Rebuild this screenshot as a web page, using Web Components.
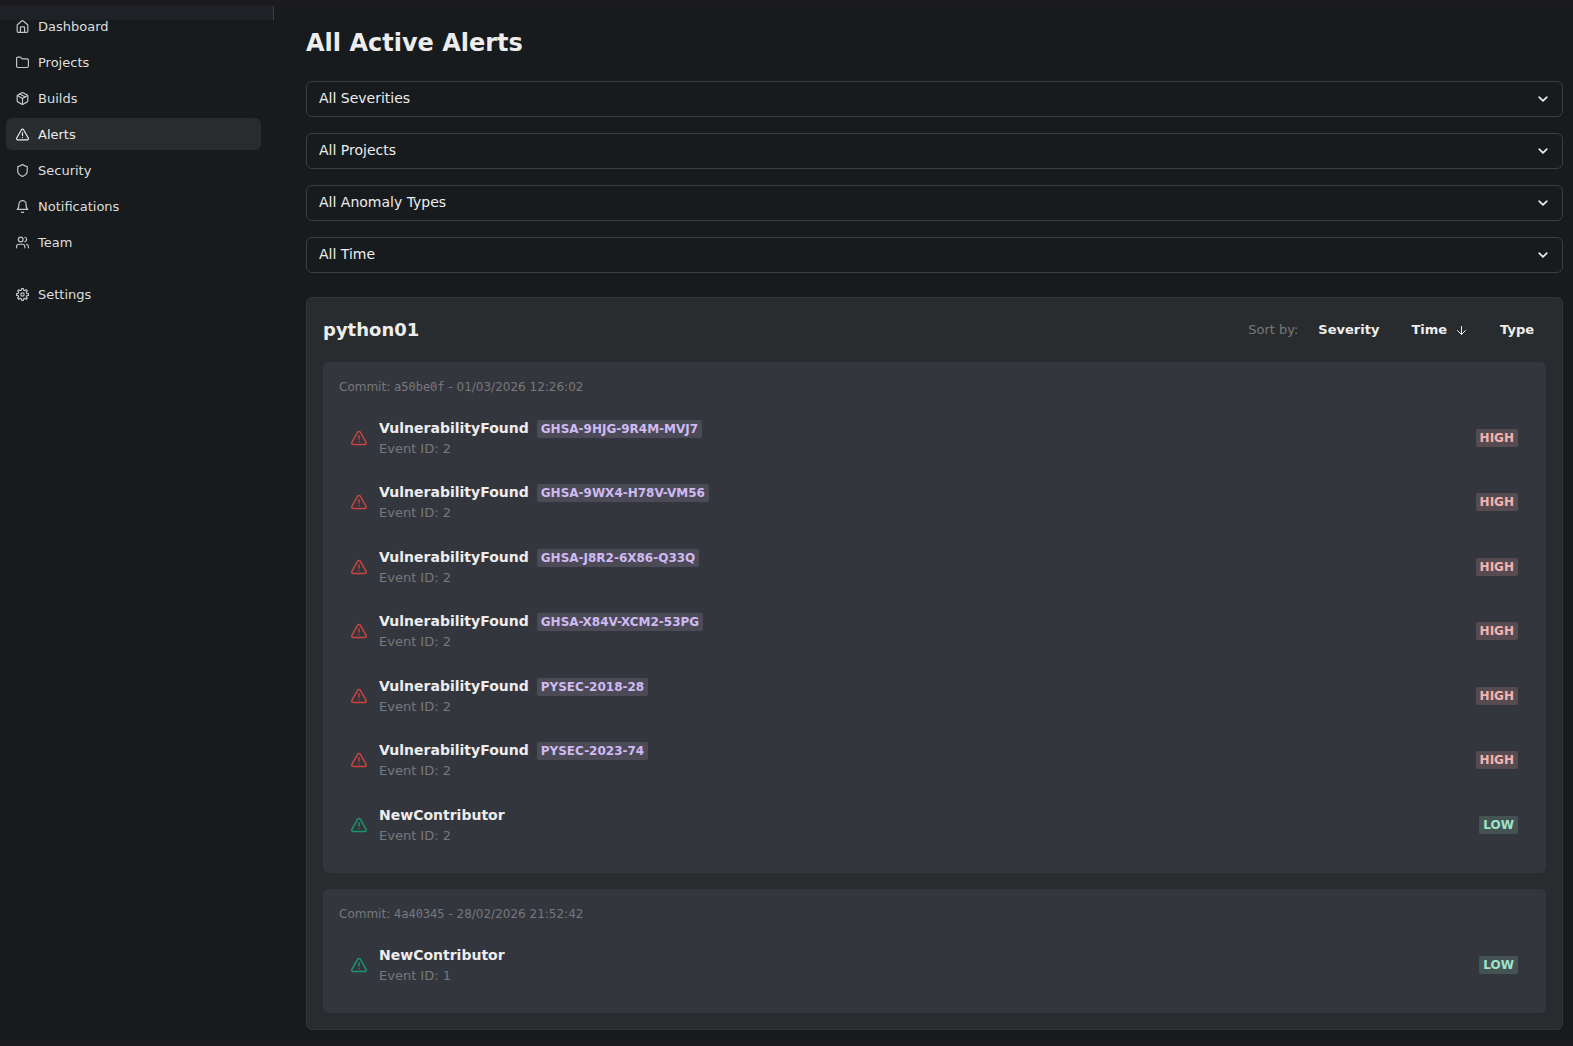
<!DOCTYPE html>
<html lang="en">
<head>
<meta charset="utf-8">
<meta name="viewport" content="width=device-width, initial-scale=1">
<title>All Active Alerts</title>
<style>
  :root{
    --bg:#171b1d; --edge:#1b1a1c; --head:#1e2226; --surface:#292c2e; --panel:#34363e;
    --line:#3b3f42; --card-line:#323639; --text:#ededed; --nav-text:#dededf; --nav-icon:#c4c5c6; --dim:#77787b;
    --red:#ca453f; --green:#1a966b;
  }
  body{margin:0;background:var(--edge);color:var(--text);font:14px/1.5 "DejaVu Sans",Verdana,sans-serif}
</style>
</head>
<body>
<app-shell>
  <side-nav slot="nav">
    <nav-item icon="home">Dashboard</nav-item>
    <nav-item icon="folder">Projects</nav-item>
    <nav-item icon="box">Builds</nav-item>
    <nav-item icon="alert" active>Alerts</nav-item>
    <nav-item icon="shield">Security</nav-item>
    <nav-item icon="bell">Notifications</nav-item>
    <nav-item icon="users">Team</nav-item>
    <nav-item icon="gear" slot="footer">Settings</nav-item>
  </side-nav>
  <alerts-page></alerts-page>
</app-shell>

<script>
// Gear outline: 8 teeth, 4 points per tooth
const gearPoints = Array.from({length:32},(_,i)=>{
  const a = (Math.floor(i/4)*45 + [-14,-8,8,14][i%4])*Math.PI/180;
  const r = i%4===1 || i%4===2 ? 10.2 : 7.6;
  return (12+r*Math.sin(a)).toFixed(2)+','+(12-r*Math.cos(a)).toFixed(2);
}).join(' ');

// Inline icons, 24px grid
const ICONS = {
  home:'<path d="M3 10.2a2 2 0 0 1 .7-1.5l7-6a2 2 0 0 1 2.6 0l7 6a2 2 0 0 1 .7 1.5V20a2 2 0 0 1-2 2H5a2 2 0 0 1-2-2z"/><path d="M8.5 22v-8.5a1 1 0 0 1 1-1h5a1 1 0 0 1 1 1V22"/>',
  folder:'<path d="M20 20.5a2 2 0 0 0 2-2V8a2 2 0 0 0-2-2h-7.9a2 2 0 0 1-1.69-.9L9.6 3.9A2 2 0 0 0 7.93 3H4a2 2 0 0 0-2 2v13.5a2 2 0 0 0 2 2Z"/>',
  box:'<path d="M11 21.73a2 2 0 0 0 2 0l7-4A2 2 0 0 0 21 16V8a2 2 0 0 0-1-1.73l-7-4a2 2 0 0 0-2 0l-7 4A2 2 0 0 0 3 8v8a2 2 0 0 0 1 1.73z"/><path d="M12 22V12"/><path d="M3.3 7 12 12l8.7-5"/><path d="m7.5 4.27 9 5.15"/>',
  alert:'<path d="m21.73 18-8-14a2 2 0 0 0-3.48 0l-8 14A2 2 0 0 0 4 21h16a2 2 0 0 0 1.73-3"/><path d="M12 9v4.5"/><path d="M12 17h.01"/>',
  shield:'<path d="M20 13c0 5-3.5 7.5-7.66 8.95a1 1 0 0 1-.67-.01C7.5 20.5 4 18 4 13V6a1 1 0 0 1 1-1c2 0 4.5-1.2 6.24-2.72a1.17 1.17 0 0 1 1.52 0C14.51 3.81 17 5 19 5a1 1 0 0 1 1 1z"/>',
  bell:'<path d="M6 8a6 6 0 0 1 12 0c0 7 3 9 3 9H3s3-2 3-9"/><path d="M10.3 21.5a2 2 0 0 0 3.4 0"/>',
  users:'<path d="M16 21v-2a4 4 0 0 0-4-4H6a4 4 0 0 0-4 4v2"/><circle cx="9" cy="7" r="4"/><path d="M22 21v-2a4 4 0 0 0-3-3.87"/><path d="M16 3.13a4 4 0 0 1 0 7.75"/>',
  gear:`<polygon points="${gearPoints}"/><circle cx="12" cy="12" r="2.8"/>`,
  down:'<path d="m5 8.5 7 7 7-7"/>',
  arrow:'<path d="M12 4v16"/><path d="m4 12 8 8 8-8"/>'
};

const icon = (name, size, stroke = 2) =>
  `<svg width="${size}" height="${size}" viewBox="1 1 22 22" fill="none" stroke="currentColor" stroke-width="${stroke}" stroke-linecap="round" stroke-linejoin="round" aria-hidden="true">${ICONS[name]}</svg>`;

class BaseElement extends HTMLElement{
  constructor(){ super(); this.attachShadow({mode:'open'}); }
  connectedCallback(){ this.shadowRoot.innerHTML = this.render(); }
}

customElements.define('app-shell', class extends BaseElement{
  render(){
    return `
      <style>
        :host{display:flex;flex-direction:column;min-height:100vh;box-sizing:border-box;padding:6px 0 8px}
        .body{flex:1;display:grid;grid-template-columns:274px minmax(0,1fr);background:var(--bg)}
      </style>
      <div class="body"><slot name="nav"></slot><slot></slot></div>
    `;
  }
});

customElements.define('side-nav', class extends BaseElement{
  render(){
    return `
      <style>
        :host{display:block}
        .head{height:14px;background:var(--head);border-right:1px solid var(--line)}
        nav{display:grid;gap:4px;margin-top:-10px;padding:0 13px 0 6px}
        .footer{margin-top:16px}
      </style>
      <div class="head"></div>
      <nav><slot></slot><div class="footer"><slot name="footer"></slot></div></nav>
    `;
  }
});

customElements.define('nav-item', class extends BaseElement{
  render(){
    return `
      <style>
        :host{display:block}
        a{display:flex;align-items:center;gap:9px;height:32px;padding:0 10px;border-radius:6px;font-size:13px;color:var(--nav-text);text-decoration:none}
        span{padding-top:2px}
        svg{flex:none;color:var(--nav-icon)}
        :host([active]) a{background:var(--surface)}
        :host([active]) :is(a,svg){color:var(--text)}
      </style>
      <a href="#"${this.hasAttribute('active') ? ' aria-current="page"' : ''}>${icon(this.getAttribute('icon'),13)}<span><slot></slot></span></a>
    `;
  }
});

customElements.define('filter-select', class extends BaseElement{
  render(){
    return `
      <style>
        :host{display:grid;align-items:center}
        select,svg{grid-area:1/1}
        select{appearance:none;width:100%;height:36px;box-sizing:border-box;margin:0;padding:0 36px 2px 12px;border:1px solid var(--line);border-radius:6px;background:var(--bg);color:var(--text);font:inherit}
        svg{justify-self:end;margin-right:14px;pointer-events:none}
      </style>
      <select aria-label="${this.getAttribute('label')}"><option>${this.getAttribute('value')}</option></select>
      ${icon('down',12,3)}
    `;
  }
});

customElements.define('tone-badge', class extends BaseElement{
  render(){
    return `
      <style>
        :host{display:inline-block;padding:0 4px;border-radius:2px;font-size:12px;font-weight:700;line-height:18px;background:#4c4a57;color:#cfbaf2}
        :host([tone=high]){background:#564b51;color:#f3b3af}
        :host([tone=low]){background:#455452;color:#9fe4cd}
      </style>
      <slot></slot>
    `;
  }
});

// One alert line: icon, title with optional advisory id, severity on the right
customElements.define('alert-row', class extends BaseElement{
  render(){
    const sev = this.getAttribute('severity'), ref = this.getAttribute('ref');
    return `
      <style>
        :host{display:flex;align-items:center;gap:12px;padding:12px}
        svg{flex:none;color:var(${sev === 'high' ? '--red' : '--green'})}
        .info{flex:1;min-width:0}
        .title{display:flex;gap:8px;height:21px}
        strong{line-height:20px}
        .title tone-badge{height:18px;margin-top:2px}
        .event{font-size:13px;color:var(--dim)}
      </style>
      ${icon('alert',16)}
      <div class="info">
        <div class="title"><strong>${this.getAttribute('type')}</strong>${ref ? `<tone-badge>${ref}</tone-badge>` : ''}</div>
        <div class="event">Event ID: ${this.getAttribute('event')}</div>
      </div>
      <tone-badge tone="${sev}">${sev.toUpperCase()}</tone-badge>
    `;
  }
});

customElements.define('commit-panel', class extends BaseElement{
  render(){
    return `
      <style>
        :host{display:block;padding:16px;border-radius:6px;background:var(--panel)}
        .commit{min-height:1.5em;margin-bottom:8px;font-size:13px;color:var(--dim)}
        .commit span{display:block;font-size:12px;line-height:18px}
        code{font:inherit;font-family:"DejaVu Sans Mono",monospace}
      </style>
      <div class="commit"><span>Commit: <code>${this.getAttribute('hash')}</code> - ${this.getAttribute('time')}</span></div>
      <slot></slot>
    `;
  }
});

customElements.define('project-card', class extends BaseElement{
  render(){
    return `
      <style>
        :host{display:grid;gap:16px;padding:16px;border:1px solid var(--card-line);border-radius:6px;background:var(--surface)}
        header{display:flex;align-items:center;justify-content:space-between}
        h2{margin:0;font-size:18px;line-height:32px}
        .sort{display:flex;align-items:center;gap:8px;font-size:13px}
        .sort span{color:var(--dim)}
        button{display:flex;align-items:center;gap:8px;height:32px;padding:0 12px;border:0;background:none;color:var(--text);font:inherit;font-weight:700;cursor:pointer}
        svg{margin:0 1px}
      </style>
      <header>
        <h2>${this.getAttribute('name')}</h2>
        <div class="sort">
          <span>Sort by:</span>
          <button type="button">Severity</button>
          <button type="button">Time ${icon('arrow',11,2)}</button>
          <button type="button">Type</button>
        </div>
      </header>
      <slot></slot>
    `;
  }
});

customElements.define('alerts-page', class extends BaseElement{
  render(){
    const filters = [['Severity','All Severities'],['Project','All Projects'],['Anomaly type','All Anomaly Types'],['Time range','All Time']];
    const found = ['GHSA-9HJG-9R4M-MVJ7','GHSA-9WX4-H78V-VM56','GHSA-J8R2-6X86-Q33Q','GHSA-X84V-XCM2-53PG','PYSEC-2018-28','PYSEC-2023-74'];
    return `
      <style>
        :host{display:block;padding:19px 10px 8px 32px}
        h1{margin:0 0 20px;font-size:24px;line-height:36px}
        .filters{display:grid;gap:16px;margin-bottom:24px}
      </style>
      <main>
        <h1>All Active Alerts</h1>
        <div class="filters">${filters.map(([l,v])=>`<filter-select label="${l}" value="${v}"></filter-select>`).join('')}</div>
        <project-card name="python01">
          <commit-panel hash="a50be0f" time="01/03/2026 12:26:02">
            ${found.map(id=>`<alert-row severity="high" type="VulnerabilityFound" ref="${id}" event="2"></alert-row>`).join('')}
            <alert-row severity="low" type="NewContributor" event="2"></alert-row>
          </commit-panel>
          <commit-panel hash="4a40345" time="28/02/2026 21:52:42">
            <alert-row severity="low" type="NewContributor" event="1"></alert-row>
          </commit-panel>
        </project-card>
      </main>
    `;
  }
});
</script>
</body>
</html>
